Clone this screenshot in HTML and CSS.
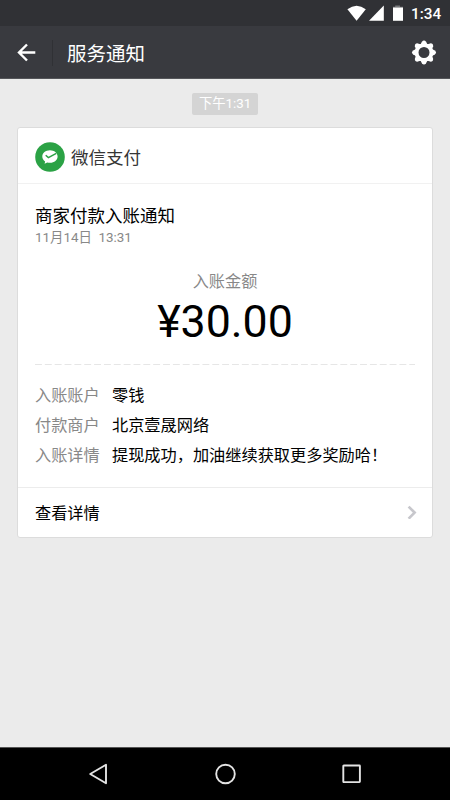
FILE: index.html
```html
<!DOCTYPE html>
<html lang="zh-CN">
<head>
<meta charset="utf-8">
<title>服务通知</title>
<link rel="stylesheet" href="styles.css">
</head>
<body>
<div class="screen">
  <div class="status">
    <svg class="status-icons" viewBox="0 0 60 20" width="60" height="20">
      <path d="M0.4 4.2Q9.6 -2.8 18.8 4.2L9.6 15.8Z" fill="#fff"/>
      <path d="M36.8 0.4V15.8H22Z" fill="#fff"/>
      <path d="M48.2 0.4H53V1.8H56V4H46V1.8H48.2Z" fill="#77787b"/>
      <path d="M46 2.6H56V15.8H46Z" fill="#fff"/>
    </svg>
    <span class="clock">1:34</span>
  </div>
  <header class="bar">
    <svg class="back" viewBox="0 0 20 20" width="20" height="20" fill="none" stroke="#fff" stroke-width="2.4"><path d="M18.3 9.5H2.5M10 1.5L2 9.5L10 17.5"/></svg>
    <span class="divider"></span>
    <h1 class="title">服务通知</h1>
    <svg class="gear" viewBox="-13 -12.5 26 26" width="26" height="26">
      <g fill="#fff">
        <g id="teeth"><path id="tooth" d="M-3.7 -7.5L-2.1 -10.8Q0 -13.2 2.1 -10.8L3.7 -7.5Z"/><use href="#tooth" transform="rotate(90)"/><use href="#tooth" transform="rotate(180)"/><use href="#tooth" transform="rotate(270)"/></g>
        <use href="#teeth" transform="rotate(45)"/>
      </g>
      <circle r="7.4" fill="#393a3f" stroke="#fff" stroke-width="3.8"/>
    </svg>
  </header>
  <main class="chat">
    <div class="stamp">下午1:31</div>
    <article class="card">
      <div class="brand">
        <svg viewBox="0 0 30 30" width="30" height="30">
          <circle cx="15" cy="15" r="14.8" fill="#2ba245"/>
          <path d="M15 8.2C10.6 8.2 7.3 11 7.3 14.5C7.3 16.6 8.4 18.4 10.1 19.5L9.6 21.7L12.2 20.4Q13.5 20.8 15 20.8C19.3 20.8 22.6 18 22.6 14.5C22.6 11 19.3 8.2 15 8.2Z" fill="#fff"/>
          <path d="M10.7 13.2L13.4 15.6L21.3 11.3" fill="none" stroke="#2ba245" stroke-width="1.5"/>
        </svg>
        <span>微信支付</span>
      </div>
      <div class="body">
        <h2 class="heading">商家付款入账通知</h2>
        <div class="date">11月14日&nbsp; 13:31</div>
        <div class="label">入账金额</div>
        <div class="amount">¥30.00</div>
        <svg class="dash" width="380" height="1"><path d="M0 .5H380" stroke="#e6e6e6" stroke-dasharray="6.9 2.95"/></svg>
        <dl class="rows">
          <dt>入账账户</dt><dd>零钱</dd>
          <dt>付款商户</dt><dd>北京壹晟网络</dd>
          <dt>入账详情</dt><dd>提现成功，加油继续获取更多奖励哈！</dd>
        </dl>
      </div>
      <div class="more">
        <span>查看详情</span>
        <svg viewBox="0 0 10 14" width="10" height="14"><path d="M1.6 1.6L7.6 7.6L1.6 13.6" fill="none" stroke="#c7c7cc" stroke-width="2.7"/></svg>
      </div>
    </article>
  </main>
  <nav class="nav">
    <svg viewBox="0 0 22 22" width="22" height="22"><path d="M18 1.8V20.2L2.2 11Z"/></svg>
    <svg viewBox="0 0 22 22" width="22" height="22"><circle cx="10.5" cy="11" r="9.3"/></svg>
    <svg viewBox="0 0 22 22" width="22" height="22"><rect x="2.3" y="2.5" width="16.6" height="16.6" rx=".5"/></svg>
  </nav>
</div>
</body>
</html>
```

FILE: styles.css
```css
* { box-sizing: border-box; margin: 0; padding: 0; }
body { font-family: Roboto, "Noto Sans CJK SC", sans-serif; background: #ebebeb; }
svg { display: block; flex: none; }
.screen { width: 450px; height: 800px; display: flex; flex-direction: column; overflow: hidden; }
.status { height: 26px; background: #303135; display: flex; padding: 5px 0 0 347px; color: #fff; }
.status-icons { margin-right: 4px; }
.clock { font-size: 15.3px; line-height: 18px; font-weight: 500; white-space: nowrap; }
.bar { height: 53px; background: #393a3f; border-bottom: 1px solid #55565a; display: flex; align-items: center; padding: 1px 13px 0 17px; }
.divider { width: 1px; height: 26px; background: #303135; margin: 0 14px 0 15px; }
.title { flex: 1; color: #fff; font-size: 19.5px; font-weight: 400; line-height: 28px; padding-top: 4px; }
.chat { flex: 1; background: #ebebeb; padding: 14px 17px 0; }
.stamp { width: 66px; height: 22px; margin: 0 auto 12px; border-radius: 2px; background: #d4d4d4; color: #fff; font-size: 13.3px; line-height: 22px; text-align: center; white-space: nowrap; }
.card { height: 411px; background: #fff; border: 1px solid #dcdcdc; border-radius: 3px; display: flex; flex-direction: column; }
.brand { height: 56px; border-bottom: 1px solid #f1f1f1; display: flex; align-items: center; gap: 6px; padding: 3px 17px 0; color: #353535; font-size: 17.5px; }
.brand span { padding-bottom: 2px; }
.body { flex: 1; padding: 19px 17px 0; }
.heading { font-size: 17.5px; font-weight: 400; line-height: 26px; color: #000; }
.date { font-size: 13.4px; line-height: 20px; color: #888; margin-top: -1px; }
.label { margin-top: 22px; font-size: 16.2px; line-height: 24px; color: #888; text-align: center; }
.amount { font-size: 44.7px; line-height: 54px; color: #000; text-align: center; margin-top: 1px; }
.dash { margin-top: 15px; }
.rows { display: grid; grid-template-columns: 77px 1fr; grid-auto-rows: 29.7px; margin-top: 16.2px; font-size: 16.2px; line-height: 29.7px; white-space: nowrap; }
.rows dt { color: #888; }
.rows dd { color: #000; }
.more { height: 50px; border-top: 1px solid #ececec; display: flex; align-items: center; justify-content: space-between; padding: 0 15px 2px 17px; font-size: 16.2px; color: #000; }
.nav { height: 53px; background: #000; border-top: 1px solid #555; display: flex; align-items: center; justify-content: space-between; padding: 0 87px 0 88px; }
.nav path, .nav circle, .nav rect { fill: none; stroke: #e3e3e3; stroke-width: 1.9; stroke-linejoin: round; }
```
